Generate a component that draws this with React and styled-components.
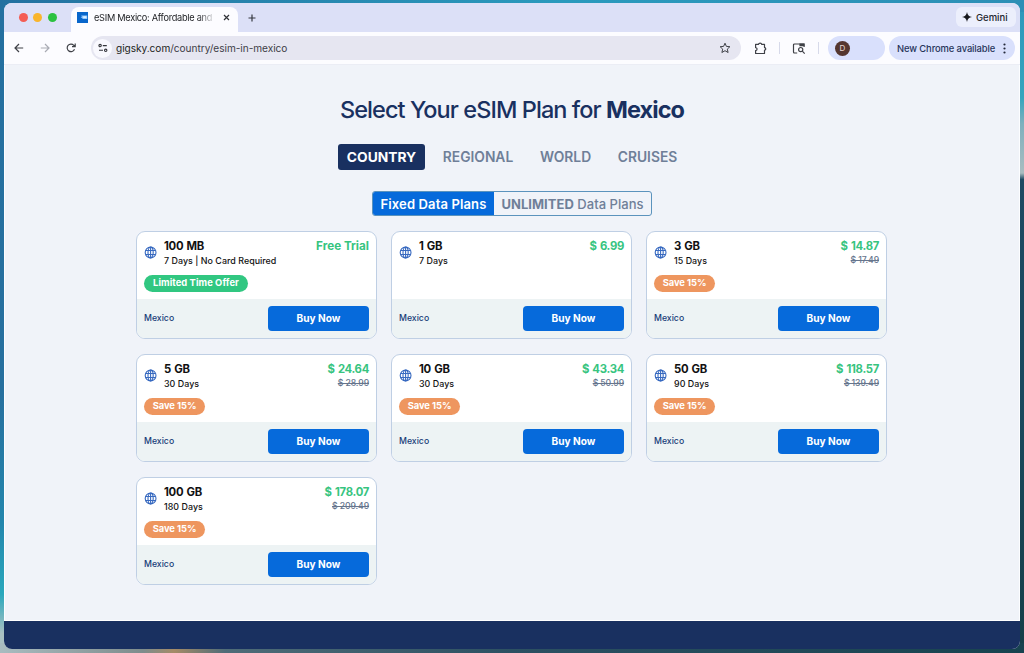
import React from 'react';
import styled, { createGlobalStyle } from 'styled-components';

const GlobalStyle = createGlobalStyle`
  * { box-sizing: border-box; }
  body { margin: 0; font-family: Inter, "Liberation Sans", sans-serif; }
  button { font-family: inherit; border: 0; padding: 0; margin: 0; background: none; }
  svg { display: block; flex: none; }
`;

const Desktop = styled.div`
  height: 653px;
  padding: 3px 4px 4px;
  overflow: hidden;
  background:
    linear-gradient(90deg, #2371a0 0, #2a9abd 55%, #2c8fb6 100%) top / 100% 12px no-repeat,
    linear-gradient(90deg, #a9bcc0 0, #7e8c8c 14%, #a58b67 17%, #4f6c78 22%, #2c5062 50%, #17434f 100%) bottom / 100% 10px no-repeat,
    linear-gradient(180deg, #2470a0 0, #27709f 60%, #2386ad 80%, #2aa8bd 91%, #a9c0c2 97%) left / 50% 100% no-repeat,
    linear-gradient(180deg, #2c97bb 0, #36a5bd 15%, #7fb0bd 19%, #a9bcc0 26.5%, #1d4a62 27.5%, #1a4a5f 60%, #153f48 100%) right / 50% 100% no-repeat;
`;

const Window = styled.div`
  display: flex;
  flex-direction: column;
  height: 646px;
  overflow: hidden;
  border-radius: 8px;
  background: #f0f3f9;
`;

const TabStrip = styled.div`
  display: flex;
  height: 29px;
  flex: none;
  padding-left: 14.5px;
  background: #dce0f7;
`;

const Lights = styled.div`
  display: flex;
  align-items: center;
  gap: 5.5px;
  width: 52.5px;
`;

const Light = styled.span`
  width: 9px;
  height: 9px;
  border-radius: 50%;
  background: ${(p) => p.$color};
`;

const Tab = styled.div`
  display: flex;
  align-items: center;
  width: 167px;
  height: 25px;
  margin-top: 4px;
  padding: 0 8px 4px 6px;
  border-radius: 8px 8px 0 0;
  background: #fcfcff;
`;

const TabTitle = styled.span`
  flex: 1;
  margin-left: 6px;
  overflow: hidden;
  white-space: nowrap;
  font-size: 9.2px;
  line-height: 14px;
  letter-spacing: -0.27px;
  color: #202226;
  mask-image: linear-gradient(90deg, #000 104px, transparent 122px);
`;

const NewTab = styled.div`
  display: flex;
  align-items: center;
  margin-left: 10px;
`;

const Gemini = styled.div`
  display: flex;
  align-items: center;
  gap: 4px;
  height: 20px;
  width: 60px;
  margin: 4px 4px 0 auto;
  padding-left: 6px;
  border-radius: 6px;
  background: #eceffc;
  font-size: 9.5px;
  font-weight: 500;
  color: #24262c;
`;

const Toolbar = styled.div`
  display: flex;
  align-items: center;
  height: 33px;
  flex: none;
  padding: 0 5px 0 10px;
  border-bottom: 1px solid #ebedf5;
  background: #fcfcff;
`;

const NavIcons = styled.div`
  display: flex;
  align-items: center;
  gap: 16px;
  width: 77px;
`;

const AddressBar = styled.div`
  display: flex;
  align-items: center;
  width: 650px;
  height: 24px;
  padding: 0 10.5px 0 2px;
  border-radius: 12px;
  background: #e6e6f1;
`;

const SiteInfo = styled.div`
  display: flex;
  align-items: center;
  justify-content: center;
  width: 19px;
  height: 19px;
  border-radius: 50%;
  background: #f9f9fe;
`;

const Url = styled.span`
  flex: 1;
  margin-left: 4px;
  font-size: 10.1px;
  letter-spacing: -0.03px;
  color: #3e4047;
  b { font-weight: 400; color: #1d1e22; }
`;

const Tools = styled.div`
  display: flex;
  align-items: center;
  gap: 12px;
  margin-left: 13px;
`;

const Divider = styled.span`
  width: 1px;
  height: 12px;
  background: #d7daea;
`;

const Profile = styled.div`
  display: flex;
  align-items: center;
  width: 57px;
  height: 24px;
  margin-left: auto;
  padding-left: 7px;
  border-radius: 12px;
  background: #d9e0fc;
`;

const Avatar = styled.span`
  display: flex;
  align-items: center;
  justify-content: center;
  width: 15px;
  height: 15px;
  border-radius: 50%;
  background: #54362f;
  font-size: 8px;
  color: #e8d8d3;
`;

const UpdatePill = styled.div`
  display: flex;
  align-items: center;
  justify-content: space-between;
  width: 126px;
  height: 24px;
  margin-left: 4px;
  padding: 0 9px 0 8px;
  border-radius: 12px;
  background: #d9e0fc;
  font-size: 9.4px;
  letter-spacing: -0.1px;
  font-weight: 500;
  white-space: nowrap;
  color: #27345a;
`;

const Page = styled.main`
  flex: 1;
  display: flex;
  flex-direction: column;
  align-items: center;
  padding-top: 28px;
  border-right: 1px solid #fcfdff;
  border-left: 1px solid #fcfdff;
`;

const Heading = styled.h1`
  margin: 0;
  font-size: 23.5px;
  line-height: 34px;
  font-weight: 500;
  letter-spacing: -0.93px;
  white-space: nowrap;
  color: #193060;
  strong { font-weight: 700; }
`;

const Scopes = styled.nav`
  display: flex;
  align-items: center;
  margin-top: 17px;
  gap: 9px;
`;

const Scope = styled.button`
  width: ${(p) => p.$width}px;
  height: 26px;
  padding-bottom: 1px;
  border-radius: 3px;
  font-size: 13.8px;
  font-weight: ${(p) => (p.$active ? 700 : 600)};
  white-space: nowrap;
  background: ${(p) => (p.$active ? '#193060' : 'transparent')};
  color: ${(p) => (p.$active ? '#fff' : '#6f7f98')};
`;

const PlanToggle = styled.div`
  display: flex;
  width: 280px;
  height: 25px;
  margin-top: 21px;
  overflow: hidden;
  border: 1px solid #5b93bd;
  border-radius: 3px;
`;

const ToggleOption = styled.button`
  width: ${(p) => p.$width}px;
  font-size: 13px;
  font-weight: ${(p) => (p.$active ? 600 : 500)};
  white-space: nowrap;
  letter-spacing: ${(p) => (p.$active ? 0.13 : 0.03)}px;
  background: ${(p) => (p.$active ? '#066adb' : 'transparent')};
  color: ${(p) => (p.$active ? '#fff' : '#6f7f98')};
  strong { font-weight: 700; }
`;

const PlanGrid = styled.section`
  display: grid;
  grid-template-columns: repeat(3, 241px);
  gap: 15px 14px;
  margin-top: 15px;
  margin-right: 1px;
`;

const Card = styled.article`
  display: flex;
  flex-direction: column;
  height: 108px;
  overflow: hidden;
  border: 1px solid #bfcfe4;
  border-radius: 9px;
  background: #fff;
`;

const CardBody = styled.div`
  flex: 1;
  padding: 7px 7px 0;
`;

const CardTop = styled.div`
  display: flex;
  height: 28px;
`;

const GlobeSlot = styled.div`
  width: 20px;
  padding-top: 7px;
`;

const Size = styled.div`
  font-size: 11.3px;
  line-height: 15px;
  font-weight: 700;
  letter-spacing: -0.25px;
  word-spacing: 0.8px;
  white-space: nowrap;
  color: #111;
`;

const Duration = styled.div`
  font-size: 8.9px;
  line-height: 13px;
  font-weight: 500;
  letter-spacing: 0.04px;
  white-space: nowrap;
  color: #111;
`;

const Prices = styled.div`
  margin-left: auto;
  text-align: right;
`;

const Price = styled.div`
  font-size: ${(p) => (p.$free ? 11.7 : 11.3)}px;
  line-height: 15px;
  font-weight: 700;
  letter-spacing: ${(p) => (p.$free ? 0 : -0.3)}px;
  word-spacing: ${(p) => (p.$free ? 0 : 1)}px;
  white-space: nowrap;
  color: #37c47f;
`;

const OldPrice = styled.div`
  font-size: 8.7px;
  line-height: 13px;
  font-weight: 500;
  letter-spacing: -0.12px;
  text-decoration: line-through;
  color: #66758d;
`;

const Badge = styled.span`
  display: flex;
  align-items: center;
  justify-content: center;
  width: ${(p) => (p.$offer ? 104 : 61)}px;
  height: 17px;
  margin-top: 8px;
  padding-bottom: 2px;
  border-radius: 9px;
  font-size: 9.4px;
  font-weight: 700;
  letter-spacing: ${(p) => (p.$offer ? 0.07 : -0.07)}px;
  white-space: nowrap;
  background: ${(p) => (p.$offer ? '#31c781' : '#ee965f')};
  color: #fff;
`;

const CardFooter = styled.div`
  display: flex;
  align-items: center;
  justify-content: space-between;
  height: 39px;
  padding: 0 7px;
  background: #edf3f4;
`;

const Region = styled.span`
  padding-bottom: 1px;
  font-size: 8.7px;
  font-weight: 500;
  color: #173c78;
`;

const BuyButton = styled.button`
  width: 101px;
  height: 25px;
  padding-bottom: 1px;
  border-radius: 4px;
  background: #066adb;
  font-size: 10.1px;
  font-weight: 700;
  color: #fff;
`;

const PageFooter = styled.footer`
  height: 29px;
  flex: none;
  border-top: 1px solid #fff;
  background: #193060;
`;

const Globe = () => (
  <svg width="13" height="13" viewBox="0 0 13 13" fill="none" stroke="#386ac0" strokeWidth="1.1">
    <circle cx="6.6" cy="6.5" r="5.4" />
    <ellipse cx="6.6" cy="6.5" rx="2.6" ry="5.4" />
    <path d="M6.6 1.100v10.800M1.700 4.500h9.800M1.700 8.500h9.800" />
  </svg>
);

const Arrow = ({ color, flip }) => (
  <svg width="10" height="10" viewBox="0 0 10 10" fill="none" stroke={color} strokeWidth="1.2">
    <path d={flip ? 'M.8 5h8M5 1l4 4-4 4' : 'M9.2 5h-8M5 1 1 5l4 4'} />
  </svg>
);

const Reload = () => (
  <svg width="10" height="10" viewBox="0 0 10 10" fill="none" stroke="#3f4147" strokeWidth="1.2">
    <path d="M8.5 6.3A3.8 3.8 0 1 1 7.8 2.3L9 3.5M9.2.6v3.1H6" />
  </svg>
);

const Tune = () => (
  <svg width="10" height="10" viewBox="0 0 10 10" fill="none" stroke="#33353b" strokeWidth="1.1">
    <circle cx="2.1" cy="2.6" r="1.2" />
    <path d="M4.8 2.6h4M1 7.3h4" />
    <circle cx="7.7" cy="7.3" r="1.2" />
  </svg>
);

const Favicon = () => (
  <svg width="11" height="11" viewBox="0 0 11 11">
    <rect width="11" height="11" fill="#0866cb" />
    <path d="M4.2 3.4h6v3.7H6L4.8 6H3.6l1.3-1z" fill="#8fc7ff" />
    <path d="M6.2 4.2h3.2v1.8H6.2z" fill="#d9efff" />
  </svg>
);

const Star = () => (
  <svg width="12" height="12" viewBox="0 0 12 12" fill="none" stroke="#3f4147" strokeWidth="1">
    <path d="m6 1.2 1.4 3.2 3.5.3-2.6 2.4.8 3.4L6 8.7l-3.1 1.8.8-3.4L1.1 4.7l3.5-.3z" />
  </svg>
);

const Puzzle = () => (
  <svg width="13" height="13" viewBox="0 0 13 13" fill="none" stroke="#3f4147" strokeWidth="1.2" strokeLinejoin="round">
    <path d="M1.6 2.3h3C4.6.7 7.6.7 7.6 2.3h2.9v3.3c1.7.1 1.7 2.5 0 2.6v3.3H1.6V8.6c2-.2 2-2.8 0-3z" />
  </svg>
);

const TabSearch = () => (
  <svg width="14" height="13" viewBox="0 0 14 13" fill="none" stroke="#3f4147" strokeWidth="1.2">
    <path d="M5.2 11H2.5a1 1 0 0 1-1-1V3a1 1 0 0 1 1-1h9.6v3" />
    <path d="M7.4 1.4h5v2.8h-5z" fill="#3f4147" stroke="none" />
    <circle cx="8.7" cy="7.6" r="2.1" />
    <path d="m10.3 9.2 2.4 2.4" />
  </svg>
);

const Cross = () => (
  <svg width="7" height="7" viewBox="0 0 7 7" stroke="#303238" strokeWidth="1.2">
    <path d="m1 1 5 5M6 1 1 6" />
  </svg>
);

const Plus = () => (
  <svg width="8" height="8" viewBox="0 0 8 8" stroke="#34373f" strokeWidth="1.2">
    <path d="M4 .5v7M.5 4h7" />
  </svg>
);

const Spark = () => (
  <svg width="10" height="10" viewBox="0 0 10 10" fill="#17181c">
    <path d="M5 0c.5 3 2 4.5 5 5-3 .5-4.5 2-5 5-.5-3-2-4.5-5-5 3-.5 4.5-2 5-5z" />
  </svg>
);

const Dots = () => (
  <svg width="3" height="11" viewBox="0 0 3 11" fill="#24293a">
    <circle cx="1.5" cy="1.5" r="1.1" />
    <circle cx="1.5" cy="5.5" r="1.1" />
    <circle cx="1.5" cy="9.5" r="1.1" />
  </svg>
);

const plans = [
  { size: '100 MB', duration: '7 Days | No Card Required', price: 'Free Trial', free: true, badge: 'Limited Time Offer' },
  { size: '1 GB', duration: '7 Days', price: '$ 6.99' },
  { size: '3 GB', duration: '15 Days', price: '$ 14.87', old: '$ 17.49', badge: 'Save 15%' },
  { size: '5 GB', duration: '30 Days', price: '$ 24.64', old: '$ 28.99', badge: 'Save 15%' },
  { size: '10 GB', duration: '30 Days', price: '$ 43.34', old: '$ 50.99', badge: 'Save 15%' },
  { size: '50 GB', duration: '90 Days', price: '$ 118.57', old: '$ 139.49', badge: 'Save 15%' },
  { size: '100 GB', duration: '180 Days', price: '$ 178.07', old: '$ 209.49', badge: 'Save 15%' },
];

const PlanCard = ({ plan }) => (
  <Card>
    <CardBody>
      <CardTop>
        <GlobeSlot><Globe /></GlobeSlot>
        <div>
          <Size>{plan.size}</Size>
          <Duration>{plan.duration}</Duration>
        </div>
        <Prices>
          <Price $free={plan.free}>{plan.price}</Price>
          {plan.old && <OldPrice>{plan.old}</OldPrice>}
        </Prices>
      </CardTop>
      {plan.badge && <Badge $offer={plan.free}>{plan.badge}</Badge>}
    </CardBody>
    <CardFooter>
      <Region>Mexico</Region>
      <BuyButton>Buy Now</BuyButton>
    </CardFooter>
  </Card>
);

export default function App() {
  return (
    <Desktop>
      <GlobalStyle />
      <Window>
        <TabStrip>
          <Lights>
            <Light $color="#f45d54" />
            <Light $color="#f9b52c" />
            <Light $color="#2bc240" />
          </Lights>
          <Tab>
            <Favicon />
            <TabTitle>eSIM Mexico: Affordable and</TabTitle>
            <Cross />
          </Tab>
          <NewTab><Plus /></NewTab>
          <Gemini><Spark />Gemini</Gemini>
        </TabStrip>
        <Toolbar>
          <NavIcons>
            <Arrow color="#3f4147" />
            <Arrow color="#a9abb3" flip />
            <Reload />
          </NavIcons>
          <AddressBar>
            <SiteInfo><Tune /></SiteInfo>
            <Url><b>gigsky.com</b>/country/esim-in-mexico</Url>
            <Star />
          </AddressBar>
          <Tools>
            <Puzzle />
            <Divider />
            <TabSearch />
            <Divider />
          </Tools>
          <Profile><Avatar>D</Avatar></Profile>
          <UpdatePill>New Chrome available<Dots /></UpdatePill>
        </Toolbar>
        <Page>
          <Heading>Select Your eSIM Plan for <strong>Mexico</strong></Heading>
          <Scopes>
            <Scope $active $width={87}>COUNTRY</Scope>
            <Scope $width={88}>REGIONAL</Scope>
            <Scope $width={69}>WORLD</Scope>
            <Scope $width={77}>CRUISES</Scope>
          </Scopes>
          <PlanToggle>
            <ToggleOption $active $width={121}>Fixed Data Plans</ToggleOption>
            <ToggleOption $width={157}><strong>UNLIMITED</strong> Data Plans</ToggleOption>
          </PlanToggle>
          <PlanGrid>
            {plans.map((plan) => <PlanCard key={plan.size} plan={plan} />)}
          </PlanGrid>
        </Page>
        <PageFooter />
      </Window>
    </Desktop>
  );
}
